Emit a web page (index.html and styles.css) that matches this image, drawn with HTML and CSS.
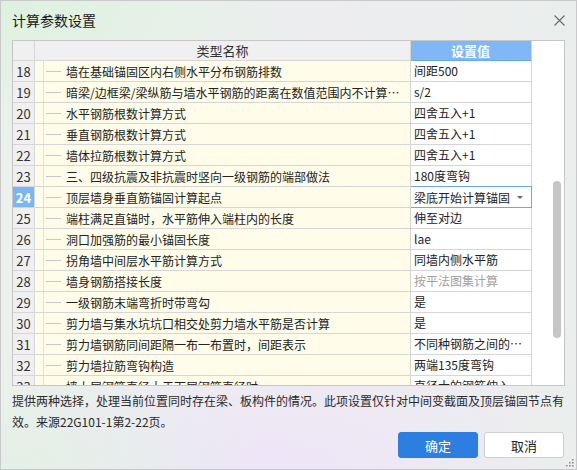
FILE: index.html
```html
<!DOCTYPE html>
<html lang="zh-CN">
<head>
    <meta charset="UTF-8">
    <title>计算参数设置</title>
    <link rel="stylesheet" href="styles.css">
</head>
<body>
    <div class="dialog">
        <div class="titlebar">
            <span class="title">计算参数设置</span>
            <svg class="close" width="11" height="11" viewBox="0 0 11 11"><path d="M0.5 0.5 L10.5 10.5 M10.5 0.5 L0.5 10.5" stroke="#6a6a6a" stroke-width="1.1" fill="none"/></svg>
        </div>

        <div class="grid">
            <div class="row head">
                <div class="num"></div>
                <div class="name">类型名称</div>
                <div class="val">设置值</div>
            </div>
            <div class="row"><div class="num">18</div><div class="name"><i class="tree"></i><span>墙在基础锚固区内右侧水平分布钢筋排数</span></div><div class="val">间距500</div></div>
            <div class="row"><div class="num">19</div><div class="name"><i class="tree"></i><span>暗梁/边框梁/梁纵筋与墙水平钢筋的距离在数值范围内不计算墙水平钢筋</span></div><div class="val">s/2</div></div>
            <div class="row"><div class="num">20</div><div class="name"><i class="tree"></i><span>水平钢筋根数计算方式</span></div><div class="val">四舍五入+1</div></div>
            <div class="row"><div class="num">21</div><div class="name"><i class="tree"></i><span>垂直钢筋根数计算方式</span></div><div class="val">四舍五入+1</div></div>
            <div class="row"><div class="num">22</div><div class="name"><i class="tree"></i><span>墙体拉筋根数计算方式</span></div><div class="val">四舍五入+1</div></div>
            <div class="row"><div class="num">23</div><div class="name"><i class="tree"></i><span>三、四级抗震及非抗震时竖向一级钢筋的端部做法</span></div><div class="val">180度弯钩</div></div>
            <div class="row current"><div class="num">24</div><div class="name"><i class="tree"></i><span>顶层墙身垂直筋锚固计算起点</span></div><div class="val combo"><span>梁底开始计算锚固</span><i class="arrow"></i></div></div>
            <div class="row"><div class="num">25</div><div class="name"><i class="tree"></i><span>端柱满足直锚时，水平筋伸入端柱内的长度</span></div><div class="val">伸至对边</div></div>
            <div class="row"><div class="num">26</div><div class="name"><i class="tree"></i><span>洞口加强筋的最小锚固长度</span></div><div class="val">lae</div></div>
            <div class="row"><div class="num">27</div><div class="name"><i class="tree"></i><span>拐角墙中间层水平筋计算方式</span></div><div class="val">同墙内侧水平筋</div></div>
            <div class="row"><div class="num">28</div><div class="name"><i class="tree"></i><span>墙身钢筋搭接长度</span></div><div class="val disabled">按平法图集计算</div></div>
            <div class="row"><div class="num">29</div><div class="name"><i class="tree"></i><span>一级钢筋末端弯折时带弯勾</span></div><div class="val">是</div></div>
            <div class="row"><div class="num">30</div><div class="name"><i class="tree"></i><span>剪力墙与集水坑坑口相交处剪力墙水平筋是否计算</span></div><div class="val">是</div></div>
            <div class="row"><div class="num">31</div><div class="name"><i class="tree"></i><span>剪力墙钢筋同间距隔一布一布置时，间距表示</span></div><div class="val">不同种钢筋之间的间距</div></div>
            <div class="row"><div class="num">32</div><div class="name"><i class="tree"></i><span>剪力墙拉筋弯钩构造</span></div><div class="val">两端135度弯钩</div></div>
            <div class="row"><div class="num">33</div><div class="name"><i class="tree"></i><span>墙上层钢筋直径大于下层钢筋直径时</span></div><div class="val">直径大的钢筋伸入</div></div>
            <div class="scroll-thumb"></div>
        </div>

        <p class="desc">提供两种选择，处理当前位置同时存在梁、板构件的情况。此项设置仅针对中间变截面及顶层锚固节点有<br>效。来源22G101-1第2-22页。</p>

        <div class="actions">
            <button class="btn primary">确定</button>
            <button class="btn">取消</button>
        </div>
        <svg class="grip" width="9" height="9" viewBox="0 0 9 9">
            <rect x="7" y="1" width="1.5" height="1.5" fill="#888"/>
            <rect x="4" y="4" width="1.5" height="1.5" fill="#888"/>
            <rect x="7" y="4" width="1.5" height="1.5" fill="#888"/>
            <rect x="1" y="7" width="1.5" height="1.5" fill="#888"/>
            <rect x="4" y="7" width="1.5" height="1.5" fill="#888"/>
            <rect x="7" y="7" width="1.5" height="1.5" fill="#888"/>
        </svg>
    </div>
</body>
</html>
```

FILE: styles.css
```css
* {
    box-sizing: border-box;
}
html, body {
    margin: 0;
    padding: 0;
}
body {
    font-family: "Noto Sans CJK SC", "Noto Sans", sans-serif;
    color: #222;
    width: 577px;
    height: 470px;
    overflow: hidden;
}
.dialog {
    position: relative;
    width: 577px;
    height: 470px;
    border: 1px solid #c9c9cc;
    padding: 0 11px;
    background:
        radial-gradient(ellipse 300px 160px at 0% 0%, rgba(220, 242, 222, 0.9), rgba(220, 242, 222, 0) 100%),
        radial-gradient(ellipse 260px 120px at 0% 100%, rgba(226, 240, 228, 0.9), rgba(226, 240, 228, 0) 100%),
        radial-gradient(ellipse 320px 130px at 45% 100%, rgba(238, 228, 248, 1), rgba(238, 228, 248, 0) 100%),
        linear-gradient(90deg, #ebf1ec 0%, #ededf0 60%, #eaeeec 100%);
}
.titlebar {
    height: 39px;
    display: flex;
    align-items: center;
    justify-content: space-between;
}
.title {
    font-size: 14px;
    color: #1a1a1a;
    margin-top: -1px;
}
.close {
    margin-top: -1px;
}

/* table */
.grid {
    position: relative;
    width: 553px;
    height: 346px;
    border: 1px solid #c6c6c6;
    background: #fff;
    overflow: hidden;
}
.row {
    display: grid;
    grid-template-columns: 22px 376px 121px;
    height: 21px;
    font-size: 12px;
}
.row > div {
    border-right: 1px solid #d6d6d6;
    border-bottom: 1px solid #d6d6d6;
    white-space: nowrap;
    overflow: hidden;
    display: flex;
    align-items: center;
}
.num {
    background: #f0f0f0;
    justify-content: center;
    font-size: 13px;
    color: #333;
}
.name {
    background: #fffde9;
    position: relative;
    padding-left: 31px;
}
.name span {
    overflow: hidden;
    text-overflow: ellipsis;
    padding-right: 4px;
}
.tree {
    position: absolute;
    left: 8px;
    top: 0;
    bottom: 0;
    width: 18px;
    border-left: 1px solid #e4e2d2;
}
.tree::after {
    content: "";
    position: absolute;
    left: 2px;
    right: 0;
    top: 10px;
    border-top: 1px solid #c8c8c8;
}
.val {
    background: #fff;
    padding-left: 3px;
    padding-right: 4px;
}
.val:not(.combo) {
    display: block !important;
    line-height: 20px;
    text-overflow: ellipsis;
}
.disabled {
    color: #a0a0a0;
}
.head {
    height: 20px;
}
.head .num,
.head .name {
    background: #f0f0f0;
    justify-content: center;
    padding-left: 0;
    color: #333;
}
.head .name {
    font-size: 13px;
}
.head .val {
    background: #80b8f7;
    color: #fff;
    text-align: center;
    font-size: 13px;
    font-weight: bold;
    border-bottom-color: #6aa6ea;
    line-height: 19px;
}
.current .num {
    background: #7cb5f6;
    color: #fff;
    font-weight: bold;
}
.combo {
    border: 1px solid #6aa9ec !important;
    margin: -1px 0 0 -1px;
    height: 22px;
    width: 122px;
    justify-content: space-between;
    padding-left: 3px;
    padding-right: 8px;
}
.arrow {
    width: 0;
    height: 0;
    border-left: 3px solid transparent;
    border-right: 3px solid transparent;
    border-top: 3px solid #666;
}
.scroll-thumb {
    position: absolute;
    left: 540px;
    top: 140px;
    width: 8px;
    height: 157px;
    border-radius: 4px;
    background: #c6c6c6;
}

.desc {
    margin: 4px 0 0 0;
    font-size: 12px;
    line-height: 21px;
    color: #2a2a2a;
    white-space: nowrap;
}
.actions {
    position: absolute;
    right: 12px;
    bottom: 11px;
    display: flex;
    gap: 6px;
}
.btn {
    width: 80px;
    height: 26px;
    font-family: "Noto Sans CJK SC", sans-serif;
    font-size: 13px;
    border-radius: 3px;
    border: 1px solid #cfcfcf;
    background: #fff;
    color: #222;
    padding: 0;
}
.btn.primary {
    background: #2c7fe0;
    border-color: #2c7fe0;
    color: #fff;
}
.grip {
    position: absolute;
    right: 2px;
    bottom: 2px;
}
```
